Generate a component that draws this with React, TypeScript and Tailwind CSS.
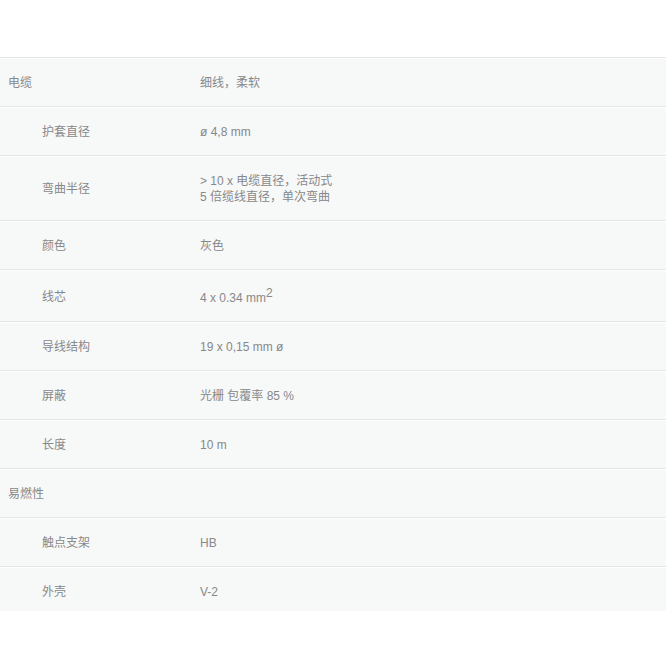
import React from "react";

type Row = { label: string; value?: React.ReactNode; sub?: boolean; last?: boolean };

const rows: Row[] = [
  { label: "电缆", value: "细线，柔软" },
  { label: "护套直径", value: "ø 4,8 mm", sub: true },
  {
    label: "弯曲半径",
    value: (
      <>
        &gt; 10 x 电缆直径，活动式
        <br />5 倍缆线直径，单次弯曲
      </>
    ),
    sub: true,
  },
  { label: "颜色", value: "灰色", sub: true },
  {
    label: "线芯",
    value: (
      <>
        4 x 0.34 mm<span className="align-super text-[12px] leading-[12px]">2</span>
      </>
    ),
    sub: true,
  },
  { label: "导线结构", value: "19 x 0,15 mm ø", sub: true },
  { label: "屏蔽", value: "光栅 包覆率 85 %", sub: true },
  { label: "长度", value: "10 m", sub: true },
  { label: "易燃性", value: "" },
  { label: "触点支架", value: "HB", sub: true },
  { label: "外壳", value: "V-2", sub: true, last: true },
];

export default function App() {
  return (
    <div
      className="w-[666px] h-[666px] bg-white pt-[57px] text-[12px] leading-[16px] text-[#888888]"
      style={{ fontFamily: '"Liberation Sans", Arial, "Noto Sans CJK SC", sans-serif' }}
    >
      <table className="w-full border-collapse bg-[#f7f8f8]">
        <tbody>
          {rows.map((r, i) => (
            <tr key={i} className="border-t border-[#e4e6e6]">
              <td
                className={`w-[200px] align-middle pt-[17px] ${r.last ? "pb-[11px]" : "pb-[15px]"} ${
                  r.sub ? "pl-[42px]" : "pl-[8px]"
                } shadow-[inset_0_1px_0_#ffffff]`}
              >
                {r.label}
              </td>
              <td
                className={`align-middle pt-[17px] ${r.last ? "pb-[11px]" : "pb-[15px]"} shadow-[inset_0_1px_0_#ffffff]`}
              >
                {r.value}
              </td>
            </tr>
          ))}
        </tbody>
      </table>
    </div>
  );
}
